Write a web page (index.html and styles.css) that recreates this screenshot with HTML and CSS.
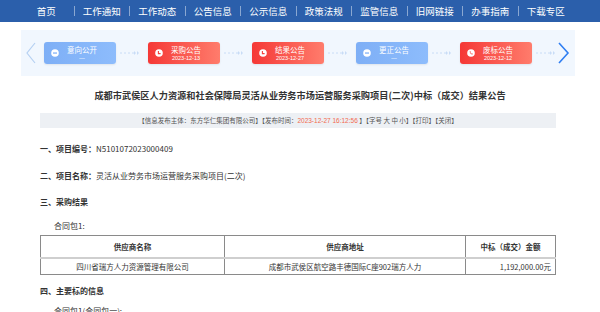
FILE: index.html
```html
<!DOCTYPE html>
<html lang="zh-CN">
<head>
    <meta charset="UTF-8">
    <meta name="viewport" content="width=device-width, initial-scale=1.0">
    <title>中标（成交）结果公告</title>
    <link rel="stylesheet" href="styles.css">
</head>
<body>
    <nav class="nav">
        <a href="#">首页</a><span class="sep"></span>
        <a href="#">工作通知</a><span class="sep"></span>
        <a href="#">工作动态</a><span class="sep"></span>
        <a href="#">公告信息</a><span class="sep"></span>
        <a href="#">公示信息</a><span class="sep"></span>
        <a href="#">政策法规</a><span class="sep"></span>
        <a href="#">监管信息</a><span class="sep"></span>
        <a href="#">旧网链接</a><span class="sep"></span>
        <a href="#">办事指南</a><span class="sep"></span>
        <a href="#">下载专区</a>
    </nav>

    <div class="steps">
        <svg class="chev" width="10" height="22" viewBox="0 0 10 22"><path d="M9 1 L1 11 L9 21" fill="none" stroke="#b5d0f2" stroke-width="1.2"/></svg>

        <div class="card blue">
            <svg class="ico" width="8" height="8" viewBox="0 0 8 8"><circle cx="4" cy="4" r="3.8" fill="#fff"/><rect x="2" y="3.4" width="4" height="1.3" fill="#85b4f8"/></svg>
            <div class="txt"><span class="t">意向公开</span><span class="d">—</span></div>
        </div>
        <svg class="link" width="32" height="6" viewBox="0 0 32 6"><path d="M4 3 H6 M8 3 H10 M12 3 H14 M16 3 H18" stroke="#c8dcf6" stroke-width="1"/><path d="M18 1 L20 3 L18 5 Z M21 1 L23 3 L21 5 Z" fill="#c8dcf6"/></svg>

        <div class="card red">
            <svg class="ico" width="8" height="8" viewBox="0 0 8 8"><circle cx="4" cy="4" r="3.8" fill="#fff"/><path d="M3.4 2 V4.6 H5.6" fill="none" stroke="#f5403c" stroke-width="1.1"/></svg>
            <div class="txt"><span class="t">采购公告</span><span class="d">2023-12-13</span></div>
        </div>
        <svg class="link" width="32" height="6" viewBox="0 0 32 6"><path d="M4 3 H6 M8 3 H10 M12 3 H14 M16 3 H18" stroke="#c8dcf6" stroke-width="1"/><path d="M18 1 L20 3 L18 5 Z M21 1 L23 3 L21 5 Z" fill="#c8dcf6"/></svg>

        <div class="card red">
            <svg class="ico" width="8" height="8" viewBox="0 0 8 8"><circle cx="4" cy="4" r="3.8" fill="#fff"/><path d="M3.4 2 V4.6 H5.6" fill="none" stroke="#f5403c" stroke-width="1.1"/></svg>
            <div class="txt"><span class="t">结果公告</span><span class="d">2023-12-27</span></div>
        </div>
        <svg class="link" width="32" height="6" viewBox="0 0 32 6"><path d="M4 3 H6 M8 3 H10 M12 3 H14 M16 3 H18" stroke="#c8dcf6" stroke-width="1"/><path d="M18 1 L20 3 L18 5 Z M21 1 L23 3 L21 5 Z" fill="#c8dcf6"/></svg>

        <div class="card blue">
            <svg class="ico" width="8" height="8" viewBox="0 0 8 8"><circle cx="4" cy="4" r="3.8" fill="#fff"/><rect x="2" y="3.4" width="4" height="1.3" fill="#85b4f8"/></svg>
            <div class="txt"><span class="t">更正公告</span><span class="d">—</span></div>
        </div>
        <svg class="link" width="32" height="6" viewBox="0 0 32 6"><path d="M4 3 H6 M8 3 H10 M12 3 H14 M16 3 H18" stroke="#c8dcf6" stroke-width="1"/><path d="M18 1 L20 3 L18 5 Z M21 1 L23 3 L21 5 Z" fill="#c8dcf6"/></svg>

        <div class="card red">
            <svg class="ico" width="8" height="8" viewBox="0 0 8 8"><circle cx="4" cy="4" r="3.8" fill="#fff"/><path d="M2.6 2.4 Q3.2 5.6 5.6 5.4 L5.6 4.6 L4.8 4.3 L4.4 4.7 Q3.6 4.2 3.4 3.4 L3.8 3 L3.5 2.2 Z" fill="#f5403c"/></svg>
            <div class="txt"><span class="t">废标公告</span><span class="d">2023-12-12</span></div>
        </div>
        <svg class="link" width="26" height="6" viewBox="0 0 26 6"><path d="M4 3 H6 M8 3 H10 M12 3 H14 M16 3 H18" stroke="#c8dcf6" stroke-width="1"/><path d="M18 1 L20 3 L18 5 Z M21 1 L23 3 L21 5 Z" fill="#c8dcf6"/></svg>

        <svg class="chev" width="12" height="22" viewBox="0 0 12 22"><path d="M1 1 L10 11 L1 21" fill="none" stroke="#2f7ef2" stroke-width="1.6"/></svg>
    </div>

    <h1 class="title">成都市武侯区人力资源和社会保障局灵活从业劳务市场运营服务采购项目(二次)中标（成交）结果公告</h1>

    <div class="info">【信息发布主体：东方华仁集团有限公司】【发布时间：<span class="time">2023-12-27 16:12:56</span> 】【字号 大 中 小】【打印】【关闭】</div>

    <div class="content">
        <p class="line first"><b>一、项目编号：</b>N5101072023000409</p>
        <p class="line"><b>二、项目名称：</b>灵活从业劳务市场运营服务采购项目(二次)</p>
        <p class="line"><b>三、采购结果</b></p>
        <p class="sub">合同包1:</p>

        <table class="result">
            <tr>
                <th class="c1">供应商名称</th>
                <th class="c2">供应商地址</th>
                <th class="c3">中标（成交）金额</th>
            </tr>
            <tr>
                <td>四川省瑞方人力资源管理有限公司</td>
                <td>成都市武侯区航空路丰德国际C座902瑞方人力</td>
                <td class="money">1,192,000.00元</td>
            </tr>
        </table>

        <p class="line four"><b>四、主要标的信息</b></p>
        <p class="sub">合同包1(合同包一):</p>
    </div>
</body>
</html>
```

FILE: styles.css
```css
body {
    margin: 0;
    background: #fff;
    font-family: 'Noto Sans CJK SC', 'Liberation Sans', sans-serif;
    color: #333;
    overflow: hidden;
}

.nav {
    display: flex;
    align-items: center;
    height: 22px;
    padding-left: 19px;
    background: #2b5fab;
}

.nav a {
    width: 54.5px;
    text-align: center;
    color: #fff;
    text-decoration: none;
    font-size: 9.5px;
    line-height: 22px;
}

.sep {
    width: 1px;
    height: 10px;
    background: rgba(255, 255, 255, 0.45);
}

.steps {
    display: flex;
    align-items: center;
    height: 46px;
    margin: 8px 25px 0 21px;
    padding-left: 5px;
    background: #f1f7fe;
}

.chev {
    display: block;
}

.steps .chev:first-child {
    margin-right: 8px;
}

.card {
    display: flex;
    align-items: center;
    width: 72px;
    height: 22px;
    border-radius: 3px;
    box-sizing: border-box;
    padding-left: 7px;
    color: #fff;
    box-shadow: 0 1px 2px rgba(0, 0, 0, 0.08);
}

.card.blue {
    background: linear-gradient(90deg, #7eaff6, #8dbcfc);
}

.card.red {
    background: linear-gradient(90deg, #f53836, #ff7c6c);
}

.ico {
    display: block;
    margin-right: 8px;
}

.txt {
    display: flex;
    flex-direction: column;
    align-items: center;
}

.txt .t {
    font-size: 7.5px;
    line-height: 9px;
}

.txt .d {
    font-size: 5.5px;
    line-height: 8px;
    font-family: 'Liberation Sans', sans-serif;
}

.link {
    display: block;
}

.title {
    margin: 13px 0 0;
    text-align: center;
    font-size: 9.2px;
    line-height: 12px;
    font-weight: bold;
    color: #333;
}

.info {
    margin: 12px 44px 0 40px;
    height: 15px;
    line-height: 15px;
    background: #edf0f4;
    text-align: center;
    font-size: 6.5px;
    color: #555;
    white-space: nowrap;
}

.time {
    color: #f26a4f;
    font-family: 'Liberation Sans', sans-serif;
}

.content {
    margin: 0 44px 0 40px;
    font-size: 8px;
}

.line {
    margin: 0;
    line-height: 12px;
}

.line.first {
    margin-top: 15px;
    margin-bottom: 15px;
}

.line + .line {
    margin-bottom: 14px;
}

.line b {
    font-weight: 600;
}

.sub {
    margin: -2px 0 3px 14px;
    line-height: 12px;
}

.result {
    width: 516px;
    border-collapse: collapse;
    border: 1px solid #8a8a8a;
    font-size: 7.5px;
}

.result th {
    height: 21px;
    padding: 0;
    line-height: 10px;
    font-weight: 600;
    border-left: 1px solid #8a8a8a;
    border-bottom: 2px solid #cfcfcf;
}

.result td {
    height: 15px;
    padding: 0;
    line-height: 10px;
    text-align: center;
    border-left: 1px solid #8a8a8a;
}

.result .c1 {
    width: 183px;
}

.result .c2 {
    width: 240px;
}

.result td.money {
    text-align: right;
    padding-right: 4px;
}

.line.four {
    margin: 10px 0 8px;
}

.line.four + .sub {
    margin-top: 0;
}
```
